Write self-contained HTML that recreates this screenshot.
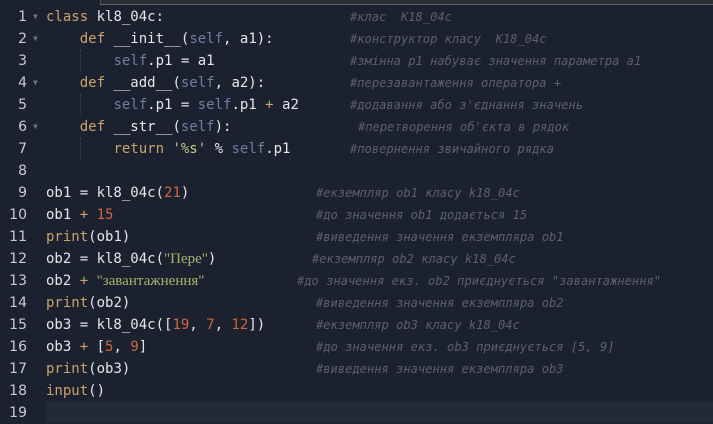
<!DOCTYPE html>
<html><head><meta charset="utf-8"><style>
html,body{margin:0;padding:0;}
body{width:713px;height:423px;background:#1c2130;position:relative;overflow:hidden;font-family:"DejaVu Sans Mono","Liberation Mono",monospace;}
.top{position:absolute;left:100px;top:0;width:613px;height:4px;background:#2a2d33;border-left:1px solid #555;border-bottom:1px solid #666;}
.act{position:absolute;left:46px;top:401px;width:667px;height:22px;background:#222836;}
.n{position:absolute;left:0;width:27px;text-align:right;color:#c8ccd4;font-size:14px;line-height:22px;font-family:"DejaVu Sans","Liberation Sans",sans-serif;}
.f{position:absolute;left:33px;color:#6c7180;font-size:8px;line-height:22px;}
.c{position:absolute;left:46px;font-size:14px;line-height:22px;color:#e6e6e6;white-space:pre;}
.m{position:absolute;font-size:12.1px;line-height:22px;color:#5b606b;font-style:italic;white-space:pre;}
.k{color:#c9a46c}.s{color:#6f7fa0}.o{color:#c9a46c}.num{color:#d0673f}.str{color:#a6b36a;font-family:"Liberation Serif",serif;font-size:15px}.q{color:#c8c58c}
.g{position:absolute;left:80px;width:0;border-left:1px dotted #3a4050;height:22px;}
</style></head><body>
<div class="top"></div>
<div class="act"></div>
<div class="g" style="top:50px"></div><div class="g" style="top:94px"></div><div class="g" style="top:138px"></div>

<div class="n" style="top:6px">1</div><div class="f" style="top:6px">▼</div>
<div class="n" style="top:28px">2</div><div class="f" style="top:28px">▼</div>
<div class="n" style="top:50px">3</div>
<div class="n" style="top:72px">4</div><div class="f" style="top:72px">▼</div>
<div class="n" style="top:94px">5</div>
<div class="n" style="top:116px">6</div><div class="f" style="top:116px">▼</div>
<div class="n" style="top:138px">7</div>
<div class="n" style="top:160px">8</div>
<div class="n" style="top:182px">9</div>
<div class="n" style="top:204px">10</div>
<div class="n" style="top:226px">11</div>
<div class="n" style="top:248px">12</div>
<div class="n" style="top:270px">13</div>
<div class="n" style="top:292px">14</div>
<div class="n" style="top:314px">15</div>
<div class="n" style="top:336px">16</div>
<div class="n" style="top:358px">17</div>
<div class="n" style="top:380px">18</div>
<div class="n" style="top:402px">19</div>

<div class="c" style="top:6px"><span class="k">class</span> kl8_04c:</div>
<div class="c" style="top:28px">    <span class="k">def</span> __init__(<span class="s">self</span>, a1):</div>
<div class="c" style="top:50px">        <span class="s">self</span>.p1 = a1</div>
<div class="c" style="top:72px">    <span class="k">def</span> __add__(<span class="s">self</span>, a2):</div>
<div class="c" style="top:94px">        <span class="s">self</span>.p1 = <span class="s">self</span>.p1 <span class="o">+</span> a2</div>
<div class="c" style="top:116px">    <span class="k">def</span> __str__(<span class="s">self</span>):</div>
<div class="c" style="top:138px">        <span class="k">return</span> <span class="q">'%s'</span> % <span class="s">self</span>.p1</div>
<div class="c" style="top:182px">ob1 = kl8_04c(<span class="num">21</span>)</div>
<div class="c" style="top:204px">ob1 <span class="o">+</span> <span class="num">15</span></div>
<div class="c" style="top:226px"><span class="k">print</span>(ob1)</div>
<div class="c" style="top:248px">ob2 = kl8_04c(<span class="str">"Пере"</span>)</div>
<div class="c" style="top:270px">ob2 <span class="o">+</span> <span class="str">"завантажнення"</span></div>
<div class="c" style="top:292px"><span class="k">print</span>(ob2)</div>
<div class="c" style="top:314px">ob3 = kl8_04c([<span class="num">19</span>, <span class="num">7</span>, <span class="num">12</span>])</div>
<div class="c" style="top:336px">ob3 <span class="o">+</span> [<span class="num">5</span>, <span class="num">9</span>]</div>
<div class="c" style="top:358px"><span class="k">print</span>(ob3)</div>
<div class="c" style="top:380px"><span class="k">input</span>()</div>

<div class="m" style="top:6px;left:350px">#клас  К18_04с</div>
<div class="m" style="top:28px;left:350px">#конструктор класу  К18_04с</div>
<div class="m" style="top:50px;left:350px">#змінна p1 набуває значення параметра a1</div>
<div class="m" style="top:72px;left:350px">#перезавантаження оператора +</div>
<div class="m" style="top:94px;left:350px">#додавання або з'єднання значень</div>
<div class="m" style="top:116px;left:358px">#перетворення об'єкта в рядок</div>
<div class="m" style="top:138px;left:350px">#повернення звичайного рядка</div>
<div class="m" style="top:182px;left:316px">#екземпляр ob1 класу k18_04c</div>
<div class="m" style="top:204px;left:316px">#до значення ob1 додається 15</div>
<div class="m" style="top:226px;left:316px">#виведення значення екземпляра ob1</div>
<div class="m" style="top:248px;left:312px">#екземпляр ob2 класу k18_04c</div>
<div class="m" style="top:270px;left:297px">#до значення екз. ob2 приєднується "завантажнення"</div>
<div class="m" style="top:292px;left:316px">#виведення значення екземпляра ob2</div>
<div class="m" style="top:314px;left:316px">#екземпляр ob3 класу k18_04c</div>
<div class="m" style="top:336px;left:316px">#до значення екз. ob3 приєднується [5, 9]</div>
<div class="m" style="top:358px;left:316px">#виведення значення екземпляра ob3</div>
</body></html>
